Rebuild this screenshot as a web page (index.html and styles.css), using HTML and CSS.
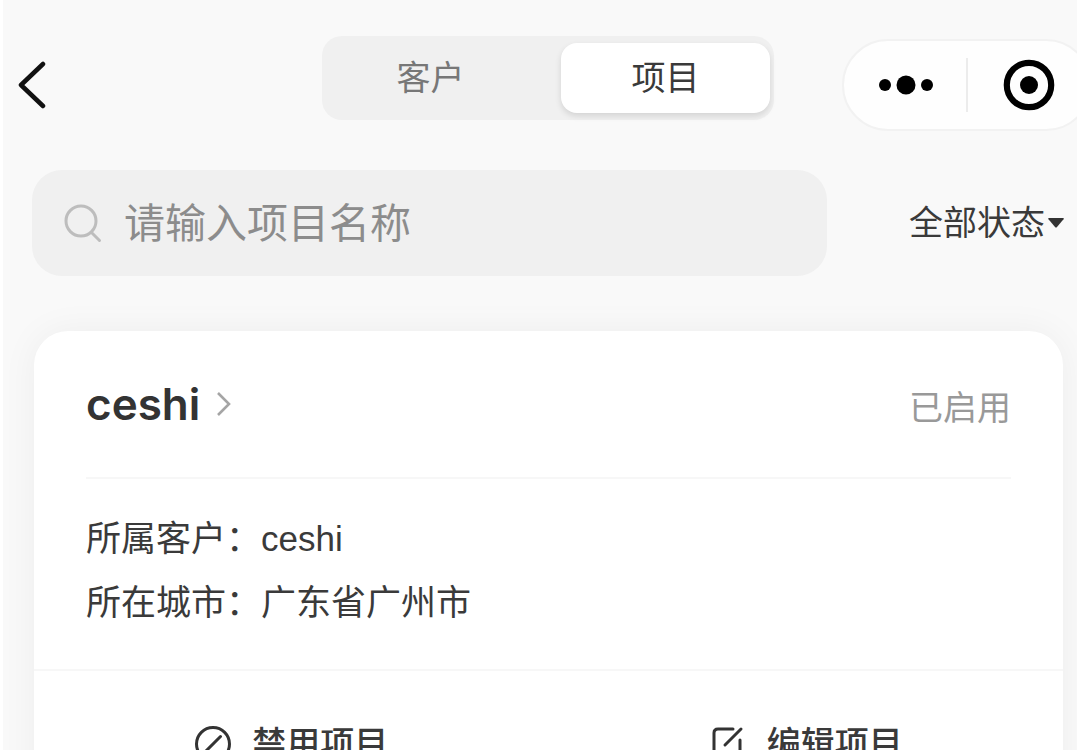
FILE: index.html
```html
<!DOCTYPE html>
<html lang="zh-CN">
<head>
  <meta charset="UTF-8" />
  <meta name="viewport" content="width=device-width, initial-scale=1.0"/>
  <title>项目</title>
  <link rel="stylesheet" href="styles.css">
</head>
<body>
  <div class="app">
    <!-- 顶部导航 -->
    <header class="header">
      <div class="back-wrap">
        <button class="back-btn" aria-label="返回">
          <svg width="30" height="50" viewBox="0 0 30 50" fill="none" stroke="#111" stroke-width="4.5" stroke-linecap="round" stroke-linejoin="round">
            <path d="M25 4 3 25l22 21"/>
          </svg>
        </button>
      </div>

      <div class="tabs">
        <button class="tab">客户</button>
        <button class="tab active">项目</button>
      </div>

      <div class="capsule">
        <button class="capsule-btn" aria-label="更多">
          <svg width="56" height="20" viewBox="0 0 56 20">
            <circle cx="8" cy="10" r="6"/>
            <circle cx="29" cy="10" r="9.5"/>
            <circle cx="50" cy="10" r="6"/>
          </svg>
        </button>
        <button class="capsule-btn" aria-label="关闭">
          <svg width="52" height="52" viewBox="0 0 52 52">
            <circle cx="26" cy="26" r="22.2" fill="none" stroke="#000" stroke-width="6.2"/>
            <circle cx="26" cy="26" r="9"/>
          </svg>
        </button>
      </div>
    </header>

    <!-- 搜索和筛选 -->
    <div class="filters">
      <label class="search">
        <svg width="38" height="40" viewBox="0 0 38 40" fill="none" stroke="#bdbdbd" stroke-width="3" stroke-linecap="round">
          <circle cx="17" cy="18" r="15"/>
          <path d="m27.500 29.500 8 8"/>
        </svg>
        <input class="search-input" type="text" placeholder="请输入项目名称" aria-label="项目名称">
      </label>
      <label class="status">
        <select class="status-select" aria-label="状态">
          <option>全部状态</option>
          <option>已启用</option>
          <option>已禁用</option>
        </select>
        <svg class="status-arrow" width="18" height="12" viewBox="0 0 18 12">
          <path d="M2 1h14q1.500 0 .5 1.300l-6.500 7.700q-1 1-2 0L1.500 2.300Q.5 1 2 1z" fill="#333"/>
        </svg>
      </label>
    </div>

    <!-- 项目卡片 -->
    <main class="card">
      <div class="card-head">
        <a class="card-title" href="#">
          ceshi
          <svg width="16" height="26" viewBox="0 0 16 26" fill="none" stroke="#a5a5a5" stroke-width="2.600">
            <path d="m2 2 11 11L2 24"/>
          </svg>
        </a>
        <span class="card-state">已启用</span>
      </div>

      <dl class="info">
        <div class="info-row">
          <dt>所属客户：</dt>
          <dd>ceshi</dd>
        </div>
        <div class="info-row">
          <dt>所在城市：</dt>
          <dd>广东省广州市</dd>
        </div>
      </dl>

      <div class="actions">
        <button class="action-btn">
          <svg width="38" height="38" viewBox="0 0 38 38" fill="none" stroke="#333" stroke-width="3" stroke-linecap="round">
            <circle cx="19" cy="19" r="16.500"/>
            <path d="M26.500 11.500l-15 15"/>
          </svg>
          禁用项目
        </button>
        <button class="action-btn">
          <svg width="38" height="38" viewBox="0 0 38 38" fill="none" stroke="#333" stroke-width="3" stroke-linecap="round" stroke-linejoin="round">
            <path d="M24 4H9Q5 4 5 8v22q0 4 4 4h18q4 0 4-4V15"/>
            <path d="M32 4 16 20"/>
          </svg>
          编辑项目
        </button>
      </div>
    </main>
  </div>
</body>
</html>
```
FILE: styles.css
```css
* {
  box-sizing: border-box;
}

body {
  margin: 0;
  padding: 0 3px;
  background: #fff;
  color: #3a3a3a;
  font-family: Inter, "Noto Sans CJK SC", sans-serif;
}

button,
input,
select {
  margin: 0;
  padding: 0;
  border: none;
  background: none;
  color: inherit;
  font-family: inherit;
}

svg {
  display: block;
  flex: none;
}

.app {
  height: 100vh;
  overflow: hidden;
  background: #f9f9f9;
}

.header {
  display: flex;
  align-items: center;
  padding-top: 36px;
}

.back-wrap {
  flex: 1;
  padding-left: 15px;
}

.back-btn {
  display: block;
}

.tabs {
  display: flex;
  width: 452px;
  height: 84px;
  margin-bottom: 14px;
  padding: 7px 4px;
  border-radius: 20px;
  background: #f0f0f0;
}

.tab {
  flex: 1;
  padding: 0 26px 0 0;
  border-radius: 16px;
  font-size: 34px;
  line-height: 50px;
  color: #777;
}

.tab.active {
  flex: none;
  width: 209px;
  padding: 0;
  background: #fff;
  color: #3a3a3a;
  box-shadow: 0 3px 6px rgba(0, 0, 0, 0.12);
}

.capsule {
  display: flex;
  align-items: center;
  width: 250px;
  height: 92px;
  margin-left: 68px;
  margin-right: -15px;
  border: 2px solid #f2f2f2;
  border-radius: 46px;
  background: #fefefe;
}

.capsule-btn {
  display: flex;
  flex: 1;
  align-items: center;
  justify-content: center;
  height: 54px;
}

.capsule-btn + .capsule-btn {
  border-left: 2px solid #ececec;
}

.filters {
  display: flex;
  align-items: center;
  justify-content: space-between;
  padding: 36px 12px 0 29px;
}

.search {
  display: flex;
  align-items: center;
  gap: 22px;
  width: 795px;
  height: 106px;
  padding: 0 32px;
  border-radius: 30px;
  background: #f0f0f0;
}

.search-input {
  flex: 1;
  min-width: 0;
  outline: none;
  font-size: 41px;
  line-height: 60px;
}

.search-input::placeholder {
  color: #8c8c8c;
  opacity: 1;
}

.status {
  display: flex;
  align-items: center;
  gap: 2px;
}

.status-select {
  appearance: none;
  font-size: 34px;
  line-height: 50px;
}

.card {
  margin: 55px 14px 0 31px;
  border-radius: 34px;
  background: #fff;
  box-shadow: 0 0 36px rgba(0, 0, 0, 0.05);
}

.card-head {
  display: flex;
  align-items: baseline;
  justify-content: space-between;
  height: 148px;
  margin: 0 52px;
  padding-top: 43px;
  border-bottom: 2px solid #f7f7f7;
}

.card-title {
  display: flex;
  align-items: center;
  gap: 16px;
  color: #333;
  font-size: 44px;
  font-weight: 600;
  line-height: 60px;
  text-decoration: none;
}

.card-state {
  color: #999;
  font-size: 34px;
  line-height: 50px;
}

.info {
  margin: 0;
  padding: 28px 52px 34px;
  font-family: "Liberation Sans", "Noto Sans CJK SC", sans-serif;
  font-size: 35px;
  line-height: 64px;
}

.info-row {
  display: flex;
}

.info-row dd {
  margin: 0;
}

.actions {
  display: flex;
  border-top: 2px solid #f7f7f7;
}

.action-btn {
  display: flex;
  flex: 1;
  align-items: center;
  justify-content: center;
  gap: 20px;
  padding: 48px 0;
  font-size: 34px;
  font-weight: 500;
  line-height: 50px;
}
```
